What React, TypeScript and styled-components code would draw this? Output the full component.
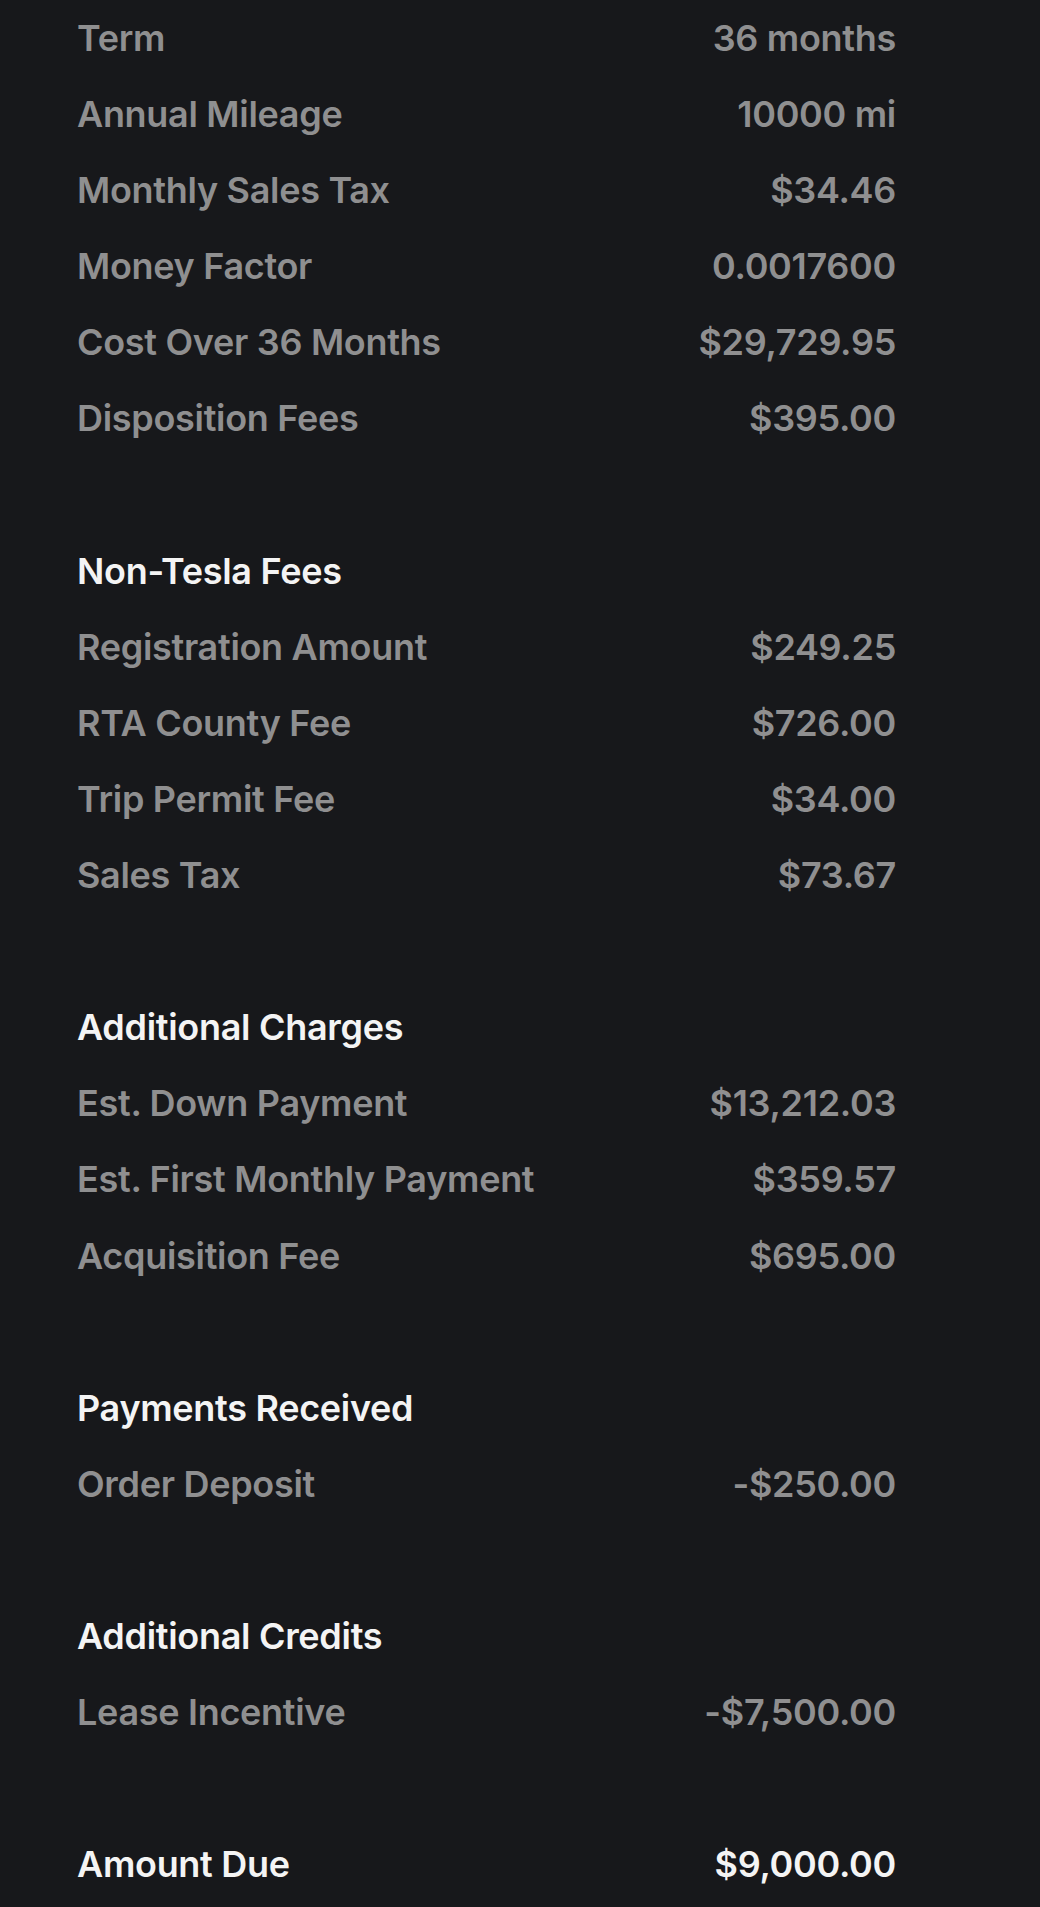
import styled, { createGlobalStyle } from 'styled-components'

const GlobalStyle = createGlobalStyle`
  html, body {
    margin: 0;
    padding: 0;
    background-color: #17181b;
  }
`

const Page = styled.div`
  box-sizing: border-box;
  width: 1040px;
  min-height: 1907px;
  padding: 0 144px 0 77px;
  background-color: #17181b;
  font-family: Inter, 'Liberation Sans', sans-serif;
  font-size: 36px;
  font-weight: 600;
  letter-spacing: -0.3px;
`

const Section = styled.section`
  & + & {
    margin-top: 76.1px;
  }
`

type RowProps = {
  $strong?: boolean
}

const Row = styled.div<RowProps>`
  display: flex;
  justify-content: space-between;
  align-items: center;
  height: 76.1px;
  line-height: 76.1px;
  color: ${({ $strong }) => ($strong ? '#f4f4f4' : '#8f8f90')};
  white-space: nowrap;
`

const Heading = styled.h3`
  margin: 0;
  height: 76.1px;
  line-height: 76.1px;
  font-size: 36px;
  font-weight: 600;
  color: #f4f4f4;
`

type LineItem = [string, string]

type SectionData = {
  title?: string
  items: LineItem[]
}

const sections: SectionData[] = [
  {
    items: [
      ['Term', '36 months'],
      ['Annual Mileage', '10000 mi'],
      ['Monthly Sales Tax', '$34.46'],
      ['Money Factor', '0.0017600'],
      ['Cost Over 36 Months', '$29,729.95'],
      ['Disposition Fees', '$395.00'],
    ],
  },
  {
    title: 'Non-Tesla Fees',
    items: [
      ['Registration Amount', '$249.25'],
      ['RTA County Fee', '$726.00'],
      ['Trip Permit Fee', '$34.00'],
      ['Sales Tax', '$73.67'],
    ],
  },
  {
    title: 'Additional Charges',
    items: [
      ['Est. Down Payment', '$13,212.03'],
      ['Est. First Monthly Payment', '$359.57'],
      ['Acquisition Fee', '$695.00'],
    ],
  },
  {
    title: 'Payments Received',
    items: [['Order Deposit', '-$250.00']],
  },
  {
    title: 'Additional Credits',
    items: [['Lease Incentive', '-$7,500.00']],
  },
]

const App = () => {
  return (
    <Page>
      <GlobalStyle />
      {sections.map((section, i) => (
        <Section key={i}>
          {section.title && <Heading>{section.title}</Heading>}
          {section.items.map(([label, value]) => (
            <Row key={label}>
              <span>{label}</span>
              <span>{value}</span>
            </Row>
          ))}
        </Section>
      ))}
      <Section>
        <Row $strong>
          <span>Amount Due</span>
          <span>$9,000.00</span>
        </Row>
      </Section>
    </Page>
  )
}

export default App
